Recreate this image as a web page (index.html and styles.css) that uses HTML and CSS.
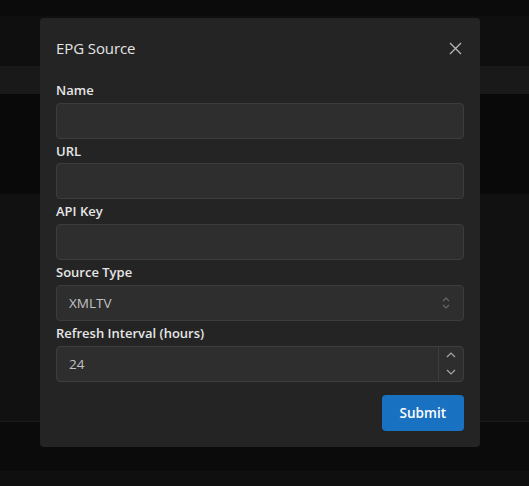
FILE: index.html
```html
<!DOCTYPE html>
<html>
<head>
<meta charset="utf-8">
<link rel="stylesheet" href="styles.css">
</head>
<body>
<div class="page">
  <div class="band b1"></div>
  <div class="band b2"></div>
  <div class="band b3"></div>
  <div class="band b4"></div>
  <div class="band b5"></div>
  <div class="band b6"></div>
  <div class="band b7"></div>
</div>
<div class="modal">
  <div class="modal-header">
    <h2 class="modal-title">EPG Source</h2>
    <button class="close" aria-label="Close">
      <svg width="15" height="15" viewBox="0 0 15 15"><path d="M2 2 L13 13 M13 2 L2 13" stroke="#b8b8b8" stroke-width="1.3" fill="none"/></svg>
    </button>
  </div>
  <form class="modal-body">
    <div class="field">
      <label class="label">Name</label>
      <div class="input"></div>
    </div>
    <div class="field">
      <label class="label">URL</label>
      <div class="input"></div>
    </div>
    <div class="field">
      <label class="label">API Key</label>
      <div class="input"></div>
    </div>
    <div class="field">
      <label class="label">Source Type</label>
      <div class="input select">
        <span class="value">XMLTV</span>
        <svg class="updown" width="10" height="14" viewBox="0 0 10 14"><path d="M2 5 L5 2 L8 5 M2 9 L5 12 L8 9" stroke="#6a6a6a" stroke-width="1.1" fill="none"/></svg>
      </div>
    </div>
    <div class="field">
      <label class="label">Refresh Interval (hours)</label>
      <div class="input number">
        <span class="value">24</span>
        <div class="controls">
          <span class="ctl"><svg width="12" height="8" viewBox="0 0 12 8"><path d="M2 6 L6 2 L10 6" stroke="#a8a8a8" stroke-width="1.2" fill="none"/></svg></span>
          <span class="ctl"><svg width="12" height="8" viewBox="0 0 12 8"><path d="M2 2 L6 6 L10 2" stroke="#a8a8a8" stroke-width="1.2" fill="none"/></svg></span>
        </div>
      </div>
    </div>
    <div class="actions">
      <button type="button" class="submit">Submit</button>
    </div>
  </form>
</div>
</body>
</html>
```
FILE: styles.css
```css
html, body {
  margin: 0;
  padding: 0;
  background: #0f0f0f;
  font-family: "Open Sans", "Noto Sans", sans-serif;
}
.page {
  display: flex;
  flex-direction: column;
  height: 486px;
}
.band { flex: none; }
.b1 { height: 16px; background: #0b0b0b; }
.b2 { height: 50px; background: #0f0f0f; }
.b3 { height: 28px; background: #191919; }
.b4 { height: 100px; background: #090909; }
.b5 { height: 227px; background: #111111; border-bottom: 1px solid #1c1c1c; }
.b6 { height: 49px; background: #0b0b0b; }
.b7 { flex: 1; background: #0f0f0f; }

.modal {
  position: absolute;
  left: 40px;
  top: 18px;
  width: 440px;
  box-sizing: border-box;
  background: #242424;
  border-radius: 4px;
}
.modal-header {
  height: 60px;
  padding: 0 16px;
  display: flex;
  align-items: center;
  justify-content: space-between;
}
.modal-title {
  margin: 0;
  font-size: 15px;
  font-weight: 400;
  color: #e4e4e4;
  letter-spacing: -0.1px;
}
.close {
  width: 28px;
  height: 28px;
  margin-right: -5px;
  border: 0;
  background: transparent;
  padding: 0;
  display: flex;
  align-items: center;
  justify-content: center;
}
.modal-body {
  padding: 0 16px 16px;
  margin: 0;
}
.field {
  padding-top: 2px;
}
.label {
  display: block;
  font-size: 13px;
  font-weight: 600;
  line-height: 21.7px;
  color: #e6e6e6;
  margin-bottom: 1px;
}
.input {
  height: 36px;
  box-sizing: border-box;
  background: #2e2e2e;
  border: 1px solid #3d3d3d;
  border-radius: 4px;
  display: flex;
  align-items: center;
  padding-left: 12px;
  font-size: 13.5px;
  color: #c2c2c2;
}
.select {
  justify-content: space-between;
  padding-right: 12px;
}
.number {
  padding-right: 0;
  justify-content: space-between;
}
.controls {
  width: 24px;
  height: 100%;
  border-left: 1px solid #3d3d3d;
  display: flex;
  flex-direction: column;
}
.ctl {
  flex: 1;
  display: flex;
  align-items: center;
  justify-content: center;
}
.actions {
  display: flex;
  justify-content: flex-end;
  margin-top: 13px;
}
.submit {
  height: 36px;
  padding: 0 18px;
  border: 0;
  border-radius: 4px;
  background: #1971c2;
  color: #ffffff;
  font-family: "Open Sans", "Noto Sans", sans-serif;
  font-size: 13.5px;
  font-weight: 600;
}
```
